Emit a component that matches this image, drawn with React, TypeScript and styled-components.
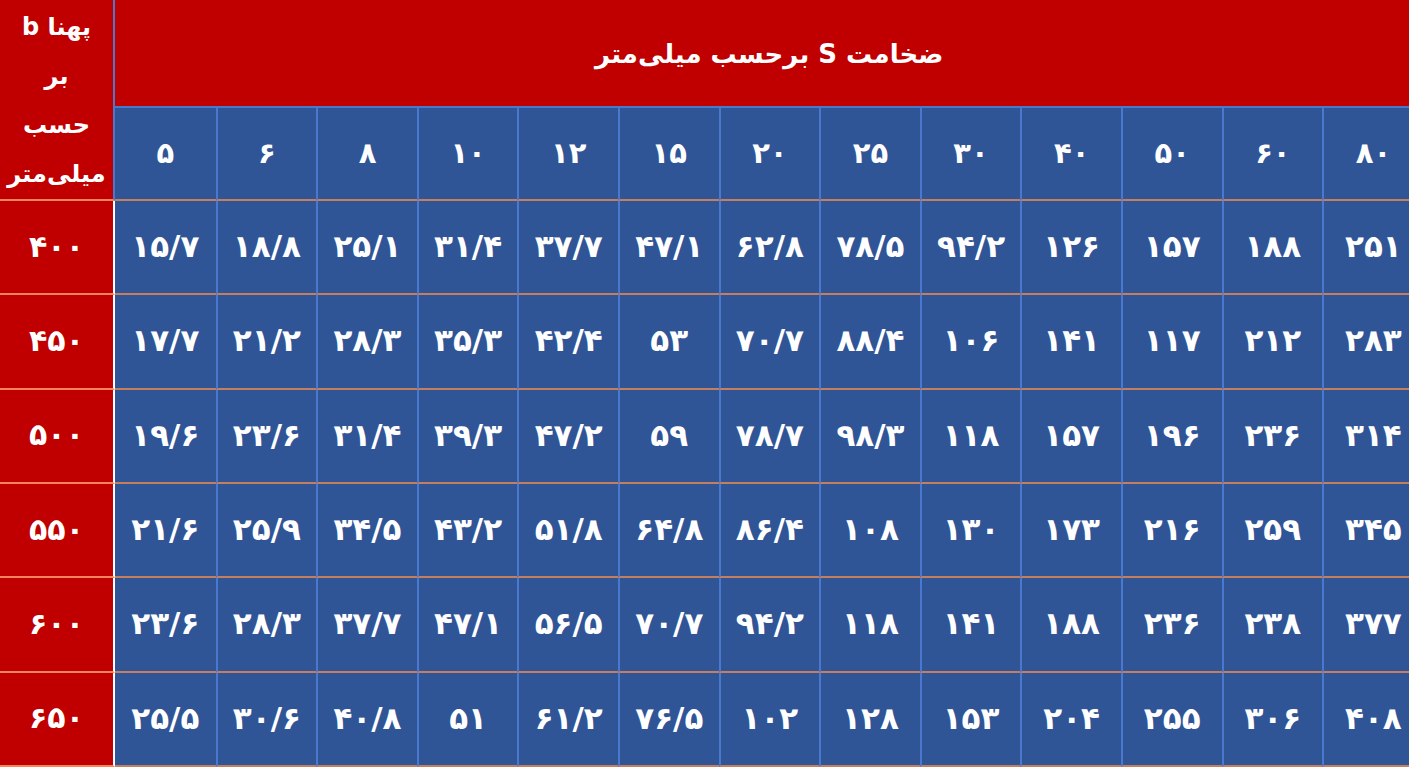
import React from 'react';
import styled, { createGlobalStyle } from 'styled-components';

const GlobalStyle = createGlobalStyle`
  html, body {
    margin: 0;
    padding: 0;
    overflow: hidden;
    background: #2f5597;
  }
  * { box-sizing: border-box; }
`;

const RED = '#c00000';
const BLUE = '#2f5597';
const COL_LINE = '#4a78cc';
const ROW_LINE_BLUE = '#c57f5e';
const ROW_LINE_RED = '#f5845c';

const Table = styled.div`
  display: grid;
  grid-template-columns: 115px repeat(13, 100.6px);
  grid-template-rows: 108px 93px repeat(6, 94.33px);
  width: 1424px;
  height: 767px;
  font-family: "DejaVu Sans", "Noto Sans", sans-serif;
  font-weight: bold;
  color: #ffffff;
`;

const Corner = styled.div`
  grid-row: 1 / span 2;
  grid-column: 1;
  background: ${RED};
  border-right: 2px solid ${COL_LINE};
  border-bottom: 2px solid ${ROW_LINE_RED};
  display: flex;
  flex-direction: column;
  align-items: center;
  justify-content: center;
  padding-top: 2px;
  font-size: 24px;
  line-height: 49px;
  direction: rtl;
`;

const Title = styled.div`
  grid-row: 1;
  grid-column: 2 / span 13;
  background: ${RED};
  border-bottom: 2px solid ${COL_LINE};
  display: flex;
  align-items: center;
  padding-left: 480px;
  padding-top: 2px;
  font-size: 26px;
  direction: ltr;
`;

const Cell = styled.div<{ $first?: boolean; $head?: boolean }>`
  background: ${BLUE};
  border-left: ${(p) => (p.$first ? 'none' : `2px solid ${COL_LINE}`)};
  border-bottom: 2px solid ${ROW_LINE_BLUE};
  display: flex;
  align-items: center;
  justify-content: center;
  font-size: ${(p) => (p.$head ? '29px' : '31px')};
  padding-bottom: 2px;
  direction: ltr;
  unicode-bidi: plaintext;
`;

const RowLabel = styled.div`
  background: ${RED};
  border-right: 2px solid #ffffff;
  border-bottom: 2px solid ${ROW_LINE_RED};
  display: flex;
  align-items: center;
  justify-content: center;
  font-size: 30px;
  padding-bottom: 2px;
`;

const toFa = (s: string) => s.replace(/\d/g, (d) => '۰۱۲۳۴۵۶۷۸۹'[Number(d)]);

const thickness = [5, 6, 8, 10, 12, 15, 20, 25, 30, 40, 50, 60, 80];

const rows: { width: number; values: string[] }[] = [
  { width: 400, values: ['15/7', '18/8', '25/1', '31/4', '37/7', '47/1', '62/8', '78/5', '94/2', '126', '157', '188', '251'] },
  { width: 450, values: ['17/7', '21/2', '28/3', '35/3', '42/4', '53', '70/7', '88/4', '106', '141', '117', '212', '283'] },
  { width: 500, values: ['19/6', '23/6', '31/4', '39/3', '47/2', '59', '78/7', '98/3', '118', '157', '196', '236', '314'] },
  { width: 550, values: ['21/6', '25/9', '34/5', '43/2', '51/8', '64/8', '86/4', '108', '130', '173', '216', '259', '345'] },
  { width: 600, values: ['23/6', '28/3', '37/7', '47/1', '56/5', '70/7', '94/2', '118', '141', '188', '236', '238', '377'] },
  { width: 650, values: ['25/5', '30/6', '40/8', '51', '61/2', '76/5', '102', '128', '153', '204', '255', '306', '408'] },
];

export default function App() {
  return (
    <>
      <GlobalStyle />
      <Table>
        <Corner>
          <div>پهنا b</div>
          <div>بر</div>
          <div>حسب</div>
          <div>میلی‌متر</div>
        </Corner>
        <Title>
          <span dir="rtl">ضخامت S برحسب میلی‌متر</span>
        </Title>
        {thickness.map((t, i) => (
          <Cell key={t} $head $first={i === 0}>
            {toFa(String(t))}
          </Cell>
        ))}
        {rows.map((r) => (
          <React.Fragment key={r.width}>
            <RowLabel>{toFa(String(r.width))}</RowLabel>
            {r.values.map((v, i) => (
              <Cell key={i} $first={i === 0}>
                {toFa(v)}
              </Cell>
            ))}
          </React.Fragment>
        ))}
      </Table>
    </>
  );
}
